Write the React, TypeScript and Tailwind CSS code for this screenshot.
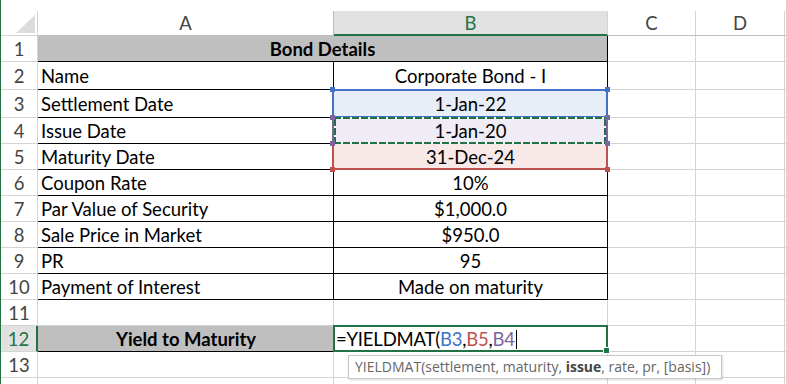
import React from 'react'

const FONT = "font-['Lato','Open_Sans',sans-serif]"

type Row = {
  n: number
  a?: string
  b?: string
  h: string
}

const rows: Row[] = [
  { n: 2, a: 'Name', b: 'Corporate Bond - I', h: 'h-[28px]' },
  { n: 3, a: 'Settlement Date', b: '1-Jan-22', h: 'h-[28px]' },
  { n: 4, a: 'Issue Date', b: '1-Jan-20', h: 'h-[26px]' },
  { n: 5, a: 'Maturity Date', b: '31-Dec-24', h: 'h-[26px]' },
  { n: 6, a: 'Coupon Rate', b: '10%', h: 'h-[26px]' },
  { n: 7, a: 'Par Value of Security', b: '$1,000.0', h: 'h-[26px]' },
  { n: 8, a: 'Sale Price in Market', b: '$950.0', h: 'h-[26px]' },
  { n: 9, a: 'PR', b: '95', h: 'h-[26px]' },
  { n: 10, a: 'Payment of Interest', b: 'Made on maturity', h: 'h-[26px]' },
]

// little square handle on a reference range corner
const Handle = ({ pos, color }: { pos: string; color: string }) => (
  <div className={`absolute w-[5px] h-[5px] ${pos} ${color} z-20`} />
)

const RangeBox = ({ n }: { n: number }) => {
  if (n === 3) {
    return (
      <>
        <div className="absolute left-[-2px] right-[-1px] top-[-1px] bottom-[-1px] border-2 border-[#4472c4] z-10" />
        <Handle pos="left-[-4px] top-[-3px]" color="bg-[#4472c4]" />
        <Handle pos="right-[-3px] top-[-3px]" color="bg-[#4472c4]" />
      </>
    )
  }
  if (n === 4) {
    return (
      <>
        <div className="absolute left-[-2px] right-[-1px] top-[-1px] bottom-[-1px] border-2 border-[#8064a2] z-10" />
        {/* marching ants */}
        <div className="absolute left-0 right-[1px] top-[-1px] h-[2px] bg-[repeating-linear-gradient(90deg,#217346_0_7px,#ffffff_7px_9px)] z-10" />
        <div className="absolute left-0 right-[1px] bottom-[-1px] h-[2px] bg-[repeating-linear-gradient(90deg,#217346_0_7px,#ffffff_7px_9px)] z-10" />
        <div className="absolute left-0 w-[2px] top-[1px] bottom-[1px] bg-[repeating-linear-gradient(180deg,#217346_0_7px,#ffffff_7px_9px)] z-10" />
        <div className="absolute right-[1px] w-[2px] top-[1px] bottom-[1px] bg-[repeating-linear-gradient(180deg,#217346_0_7px,#ffffff_7px_9px)] z-10" />
        <Handle pos="left-[-4px] top-[-3px]" color="bg-[#8064a2]" />
        <Handle pos="right-[-3px] top-[-3px]" color="bg-[#8064a2]" />
        <Handle pos="left-[-4px] bottom-[-3px]" color="bg-[#8064a2]" />
        <Handle pos="right-[-3px] bottom-[-3px]" color="bg-[#8064a2]" />
      </>
    )
  }
  if (n === 5) {
    return (
      <>
        <div className="absolute left-[-2px] right-[-1px] top-[1px] bottom-[-1px] border-2 border-t-0 border-[#c0504d] z-10" />
        <Handle pos="left-[-4px] bottom-[-3px]" color="bg-[#c0504d]" />
        <Handle pos="right-[-3px] bottom-[-3px]" color="bg-[#c0504d]" />
      </>
    )
  }
  return null
}

const fill: Record<number, string> = {
  3: 'bg-[#e8eef8]',
  4: 'bg-[#efecf6]',
  5: 'bg-[#f8e8e8]',
}

export default function App() {
  return (
    <div className={`w-[786px] h-[384px] overflow-hidden bg-white border-l border-[#217346] text-[18.5px] leading-none text-black ${FONT}`}>
      <div className="h-[11px]" />
      <div className="grid grid-cols-[37px_296px_274px_88px_89px_1fr]">
        {/* column headers */}
        <div className="h-[25px] border-r border-b border-[#d4d4d4] relative">
          <svg className="absolute left-[15px] top-[4px]" width="19" height="18" viewBox="0 0 19 18">
            <polygon points="19,0 19,18 0,18" fill="#dcdcdc" />
          </svg>
        </div>
        <div className="h-[25px] border-r border-b border-[#bdbdbd] flex items-center justify-center text-[#444]">A</div>
        <div className="h-[25px] border-r border-[#d4d4d4] border-b-2 border-b-[#217346] bg-[#e1e1e1] flex items-center justify-center text-[#217346] pt-[1px]">B</div>
        <div className="h-[25px] border-r border-b border-[#d4d4d4] border-b-[#bdbdbd] flex items-center justify-center text-[#444]">C</div>
        <div className="h-[25px] border-r border-b border-[#d4d4d4] border-b-[#bdbdbd] flex items-center justify-center text-[#444]">D</div>
        <div className="h-[25px] border-b border-[#bdbdbd]" />

        {/* row 1 */}
        <div className="h-[26px] border-r border-b border-[#d4d4d4] flex items-center justify-center pt-[1px] text-[#444]">1</div>
        <div className="col-span-2 h-[26px] bg-[#bfbfbf] border-r border-b border-black flex items-center justify-center pt-[1px] font-bold">Bond Details</div>
        <div className="h-[26px] border-r border-b border-[#d4d4d4]" />
        <div className="h-[26px] border-r border-b border-[#d4d4d4]" />
        <div className="h-[26px] border-b border-[#d4d4d4]" />

        {rows.map((r) => (
          <React.Fragment key={r.n}>
            <div className={`${r.h} border-r border-b border-[#d4d4d4] flex items-center justify-center pt-[2px] text-[#444]`}>{r.n}</div>
            <div className={`${r.h} border-r border-b border-black flex items-center pl-[3px] pt-[2px]`}>{r.a}</div>
            <div className={`${r.h} border-r border-b border-black flex items-center justify-center pt-[2px] relative ${fill[r.n] ?? ''}`}>
              <RangeBox n={r.n} />
              <span className="relative z-0">{r.b}</span>
            </div>
            <div className={`${r.h} border-r border-b border-[#d4d4d4]`} />
            <div className={`${r.h} border-r border-b border-[#d4d4d4]`} />
            <div className={`${r.h} border-b border-[#d4d4d4]`} />
          </React.Fragment>
        ))}

        {/* row 11 */}
        <div className="h-[26px] border-r border-b border-[#d4d4d4] flex items-center justify-center pt-[2px] text-[#444]">11</div>
        <div className="h-[26px] border-r border-b border-[#d4d4d4]" />
        <div className="h-[26px] border-r border-b border-[#d4d4d4]" />
        <div className="h-[26px] border-r border-b border-[#d4d4d4]" />
        <div className="h-[26px] border-r border-b border-[#d4d4d4]" />
        <div className="h-[26px] border-b border-[#d4d4d4]" />

        {/* row 12 */}
        <div className="h-[26px] bg-[#e1e1e1] border-r-2 border-r-[#217346] border-b border-b-[#d4d4d4] flex items-center justify-center pt-[2px] text-[#217346]">12</div>
        <div className="h-[26px] bg-[#bfbfbf] border-b border-black flex items-center justify-center pt-[2px] font-bold">Yield to Maturity</div>
        <div className="h-[26px] border-r border-b border-[#d4d4d4] relative">
          <div className="absolute left-[-1px] right-[-1px] top-[-1px] bottom-[-1px] border-2 border-[#217346] z-10" />
          <div className="absolute right-[-3px] bottom-[-3px] w-[5px] h-[5px] bg-[#217346] border border-white box-content z-20" />
          <div className="h-full flex items-center pl-[2px] pt-[2px] tracking-[-0.2px]">
            <span>=YIELDMAT(</span>
            <span className="text-[#4472c4]">B3</span>
            <span>,</span>
            <span className="text-[#c0504d]">B5</span>
            <span>,</span>
            <span className="text-[#8064a2]">B4</span>
            <span className="w-[1px] h-[19px] bg-black ml-[1px]" />
          </div>
          {/* function tooltip */}
          <div className="absolute left-[14px] top-[29px] w-[374px] h-[24px] bg-white border border-[#c6c6c6] shadow-[1px_1px_2px_rgba(0,0,0,0.15)] z-30 flex items-center pl-[6px] text-[14px] text-[#666] whitespace-nowrap font-['Open_Sans',sans-serif]">
            YIELDMAT(settlement, maturity,&nbsp;<b className="text-[#444]">issue</b>, rate, pr, [basis])
          </div>
        </div>
        <div className="h-[26px] border-r border-b border-[#d4d4d4]" />
        <div className="h-[26px] border-r border-b border-[#d4d4d4]" />
        <div className="h-[26px] border-b border-[#d4d4d4]" />

        {/* row 13 */}
        <div className="h-[26px] border-r border-b border-[#d4d4d4] flex items-center justify-center pt-[2px] text-[#444]">13</div>
        <div className="h-[26px] border-r border-b border-[#d4d4d4]" />
        <div className="h-[26px] border-r border-b border-[#d4d4d4]" />
        <div className="h-[26px] border-r border-b border-[#d4d4d4]" />
        <div className="h-[26px] border-r border-b border-[#d4d4d4]" />
        <div className="h-[26px] border-b border-[#d4d4d4]" />

        {/* row 14 (cut off) */}
        <div className="h-[26px] border-r border-[#d4d4d4]" />
        <div className="h-[26px] border-r border-[#d4d4d4]" />
        <div className="h-[26px] border-r border-[#d4d4d4]" />
        <div className="h-[26px] border-r border-[#d4d4d4]" />
        <div className="h-[26px] border-r border-[#d4d4d4]" />
        <div className="h-[26px]" />
      </div>
    </div>
  )
}
